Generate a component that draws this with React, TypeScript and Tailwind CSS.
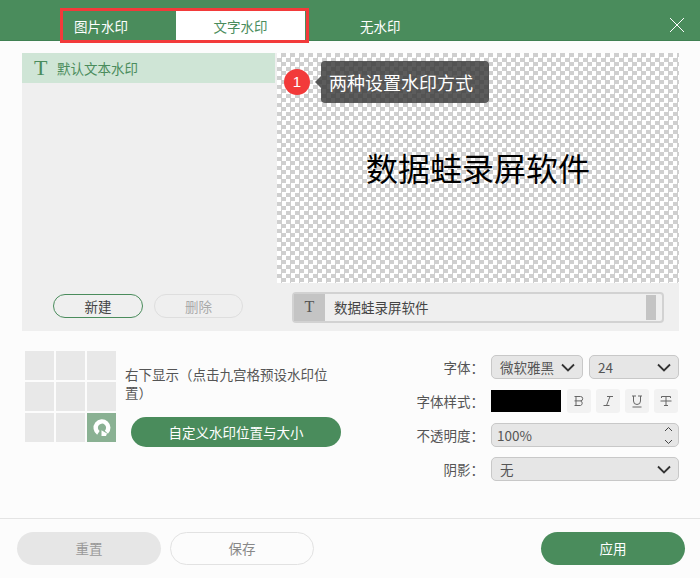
const font = "font-['Noto_Sans_CJK_SC','Liberation_Sans',sans-serif]";

function Chevron({ className = '' }: { className?: string }) {
  return (
    <svg width="14" height="9" viewBox="0 0 14 9" fill="none" className={className}>
      <polyline points="1,1.5 7,7.5 13,1.5" stroke="#333" strokeWidth="1.8" />
    </svg>
  );
}

function SelectBox({ label, width, pad = 'pl-2' }: { label: string; width: string; pad?: string }) {
  return (
    <div className={`${width} ${pad} h-[24px] flex items-center justify-between pr-[7px] bg-[#e6e6e6] border border-[#c8c8c8] rounded-[5px] text-[13.5px] text-[#555]`}>
      <span>{label}</span>
      <Chevron />
    </div>
  );
}

function StyleButton({ children }: { children: React.ReactNode }) {
  return (
    <div className="w-[24px] h-[24px] flex items-center justify-center bg-[#f2f2f2] rounded-[3px]">
      <svg width="14" height="14" viewBox="0 0 14 14" fill="none" stroke="#666" strokeWidth="1">
        {children}
      </svg>
    </div>
  );
}

function FormRow({ label, children }: { label: string; children: React.ReactNode }) {
  return (
    <div className="flex items-center">
      <div className="w-[94px] text-right text-[13.5px] text-[#555] whitespace-nowrap">{label}</div>
      <div className="ml-[7px] flex items-center">{children}</div>
    </div>
  );
}

export default function App() {
  return (
    <div className={`${font} w-[700px] h-[578px] bg-[#fcfcfc] flex flex-col overflow-hidden`}>
      {/* Header */}
      <header className="relative h-[41px] bg-[#4a8c5c] border-b border-[#3f8052] flex items-start text-[13.5px] text-white shrink-0">
        <span className="ml-[74px] mt-[11px] h-[30px] flex items-center">图片水印</span>
        <div className="ml-[48px] w-[129px] h-[30px] mt-[11px] bg-white text-[#4a8c5c] flex items-center justify-center">文字水印</div>
        <span className="ml-[55px] mt-[11px] h-[30px] flex items-center">无水印</span>
        <svg width="16" height="16" viewBox="0 0 16 16" className="ml-auto mr-[15px] mt-[17px]" stroke="#fff" strokeWidth="1" fill="none">
          <line x1="1" y1="1" x2="15" y2="15" />
          <line x1="15" y1="1" x2="1" y2="15" />
        </svg>
        <div className="absolute left-[60px] top-[8px] w-[249px] h-[35px] border-[3px] border-[#f23a3a]" />
      </header>

      {/* Main panel */}
      <div className="mt-[12px] mx-[22px] w-[657px] h-[278px] flex bg-[#efefef] shrink-0">
        <div className="w-[253px] flex flex-col">
          <div className="h-[30px] bg-[#cfe5d6] flex items-center pl-[12px] text-[#4a8c5c] text-[13.5px]">
            <span className="font-['Liberation_Serif',serif] text-[22px] leading-none w-[23px]">T</span>
            <span>默认文本水印</span>
          </div>
          <div className="mt-auto mb-[13px] flex gap-[11px] pl-[31px]">
            <div className="w-[90px] h-[24px] flex items-center justify-center rounded-full border border-[#4a8c5c] text-[13.5px] text-[#444]">新建</div>
            <div className="w-[89px] h-[24px] flex items-center justify-center rounded-full border border-[#dedede] text-[13.5px] text-[#aaa]">删除</div>
          </div>
        </div>
        <div className="ml-[2px] flex-1 flex flex-col">
          <div className="relative h-[230px] bg-white bg-[conic-gradient(#cfcfcf_25%,#fff_0_50%,#cfcfcf_0_75%,#fff_0)] bg-[length:9px_9px] flex items-center justify-center">
            <span className="text-[32px] text-black leading-none mb-[3px]">数据蛙录屏软件</span>
            <div className="absolute left-[7px] top-[16px] w-[26px] h-[26px] rounded-full bg-[#f23a3a] text-white text-[15px] flex items-center justify-center font-['Liberation_Sans',sans-serif]">1</div>
            <div className="absolute left-[44px] top-[8px] w-[168px] h-[42px] rounded-[4px] bg-[#333]/80 text-white text-[18px] flex items-center pl-[8px]">
              两种设置水印方式
              <div className="absolute -left-[6px] top-[15px] w-0 h-0 border-y-[6px] border-y-transparent border-r-[6px] border-r-[#333]/80" />
            </div>
          </div>
          <div className="flex-1 flex items-center pl-[15px] pr-[15px]">
            <div className="w-[372px] h-[31px] flex border-2 border-[#d2d2d2] rounded-[4px] text-[13.5px] text-[#444]">
              <div className="w-[31px] bg-[#c4c4c4] flex items-center justify-center font-['Liberation_Serif',serif] text-[16px] text-[#555]">T</div>
              <div className="flex-1 pl-[9px] flex items-center">数据蛙录屏软件</div>
              <div className="w-[10px] my-[1px] mr-[6px] bg-[#c4c4c4]" />
            </div>
          </div>
        </div>
      </div>

      {/* Settings */}
      <div className="flex flex-1 pt-[20px]">
        <div className="ml-[25px] grid grid-cols-[29px_29px_29px] grid-rows-[29px_29px_29px] gap-[2px] h-fit shrink-0">
          {Array.from({ length: 8 }).map((_, i) => (
            <div key={i} className="bg-[#e8e8e8]" />
          ))}
          <div className="bg-[#8ab193] flex items-center justify-center">
            <svg width="22" height="22" viewBox="0 0 22 22" fill="none">
              <path d="M7.4 15.9A6.3 6.3 0 1 1 15.4 15.2" stroke="#fff" strokeWidth="4.4" />
              <path d="M10.5 13.2l5.5 3.2-1 2.6h-4.5z" fill="#fff" />
            </svg>
          </div>
        </div>
        <div className="ml-[9px] w-[216px] flex flex-col h-[96px]">
          <p className="mt-[14px] w-[208px] text-[13.5px] leading-[18px] text-[#555]">右下显示（点击九宫格预设水印位置）</p>
          <div className="mt-auto ml-[6px] w-[210px] h-[30px] rounded-full bg-[#4a8c5c] text-white text-[13.5px] flex items-center justify-center">自定义水印位置与大小</div>
        </div>
        <div className="ml-[49px] mt-[4px] flex flex-col gap-[10px]">
          <FormRow label="字体：">
            <SelectBox label="微软雅黑" width="w-[92px]" />
            <SelectBox label="24" width="w-[90px] ml-[6px]" />
          </FormRow>
          <FormRow label="字体样式：">
            <div className="w-[70px] h-[22px] bg-black" />
            <div className="ml-[6px] flex gap-[5px]">
              <StyleButton><path d="M2.5 2.5h6a2.2 2.2 0 0 1 0 4.4h-6M8.5 6.9a2.4 2.4 0 0 1 0 4.6h-6M4 2.5v9" /></StyleButton>
              <StyleButton><path d="M6 2.5h6M2.5 11.5h6M9 2.5L5.5 11.5" /></StyleButton>
              <StyleButton><path d="M2 2h4M8 2h4M3.5 2v5a3.5 3.5 0 0 0 7 0V2M2.5 13h9" /></StyleButton>
              <StyleButton><path d="M2.5 4V2.5h9V4M7 2.5v9M1.5 7h11M5 11.5h4" /></StyleButton>
            </div>
          </FormRow>
          <FormRow label="不透明度：">
            <div className="w-[188px] h-[24px] flex items-center justify-between pl-[5px] pr-[5px] bg-[#e6e6e6] border border-[#c8c8c8] rounded-[5px] text-[13.5px] text-[#555]">
              <span>100%</span>
              <svg width="9" height="19" viewBox="0 0 9 19" fill="none" stroke="#444" strokeWidth="1">
                <polyline points="1,5 4.5,1.5 8,5" />
                <polyline points="1,14 4.5,17.5 8,14" />
              </svg>
            </div>
          </FormRow>
          <FormRow label="阴影：">
            <SelectBox label="无" width="w-[188px]" />
          </FormRow>
        </div>
      </div>

      {/* Footer */}
      <footer className="h-[60px] border-t border-[#e4e4e4] flex items-start pt-[13px] pl-[17px] pr-[15px] text-[13.5px] shrink-0">
        <div className="w-[144px] h-[33px] rounded-full bg-[#e6e6e6] text-[#999] flex items-center justify-center">重置</div>
        <div className="ml-[9px] w-[144px] h-[33px] rounded-full border border-[#e2e2e2] text-[#888] flex items-center justify-center">保存</div>
        <div className="ml-auto w-[144px] h-[33px] rounded-full bg-[#4a8c5c] text-white flex items-center justify-center">应用</div>
      </footer>
    </div>
  );
}
